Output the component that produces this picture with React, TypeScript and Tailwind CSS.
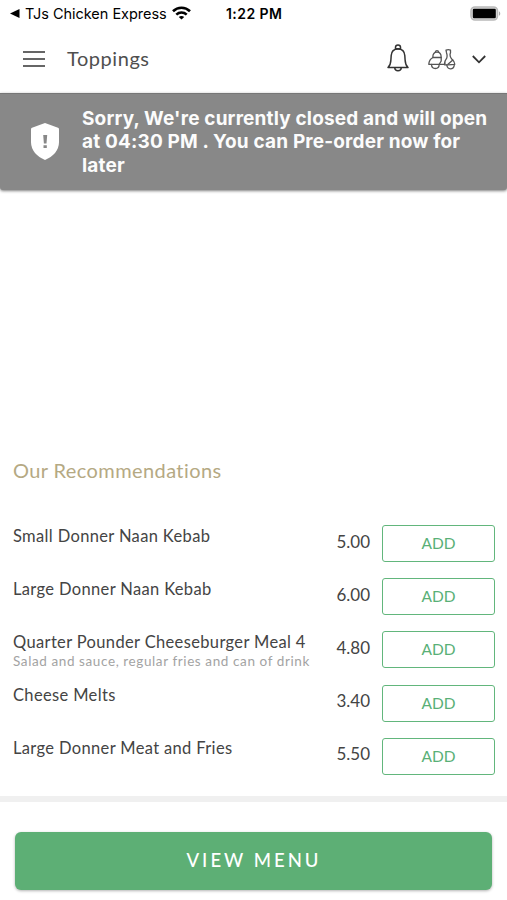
import React from 'react';

interface MenuItem {
  name: string;
  price: string;
  description?: string;
}

const items: MenuItem[] = [
  { name: 'Small Donner Naan Kebab', price: '5.00' },
  { name: 'Large Donner Naan Kebab', price: '6.00' },
  {
    name: 'Quarter Pounder Cheeseburger Meal 4',
    price: '4.80',
    description: 'Salad and sauce, regular fries and can of drink',
  },
  { name: 'Cheese Melts', price: '3.40' },
  { name: 'Large Donner Meat and Fries', price: '5.50' },
];

const StatusBar: React.FC = () => (
  <div className="flex h-[26px] items-center pl-[10px] pr-[6px] font-['Inter',sans-serif] text-black">
    <svg width="10" height="9" viewBox="0 0 10 9" className="mt-px">
      <path d="M0 4.5 9.5 0v9z" />
    </svg>
    <span className="ml-[5px] mt-[2px] w-[141px] whitespace-nowrap text-[14.5px] leading-5 tracking-[-0.03px]">
      TJs Chicken Express
    </span>
    <svg width="19" height="14" viewBox="0 0 19 14" className="ml-[6px] shrink-0" fill="none" stroke="#000" strokeWidth="2.6">
      <path d="M1 5.2C5.8.5 13.2.5 18 5.2" />
      <path d="M4.3 8.6c3-2.8 7.4-2.8 10.4 0" />
      <path d="M9.5 13.6 6.8 11c1.5-1.4 3.9-1.4 5.4 0z" fill="#000" stroke="none" />
    </svg>
    <span className="ml-[35px] mt-[2px] whitespace-nowrap text-[14px] font-semibold leading-5 tracking-[0.44px]">1:22 PM</span>
    <svg width="31" height="15" viewBox="0 0 31 15" className="ml-auto">
      <rect x="1" y="1" width="26.5" height="13" rx="4" fill="#ddd" stroke="#b9b9b9" strokeWidth="1.6" />
      <rect x="2.8" y="2.8" width="23" height="9.4" rx="1.2" />
      <path d="M29 5.2c1.7.8 1.7 3.8 0 4.6z" fill="#aaa" />
    </svg>
  </div>
);

const Header: React.FC = () => (
  <header className="flex h-[67px] items-center pl-[23px] pr-[20px]">
    <button aria-label="Menu" className="-mt-[2px] flex w-[22px] flex-col gap-[5px]">
      <span className="h-[2px] bg-[#666]" />
      <span className="h-[2px] bg-[#666]" />
      <span className="h-[2px] bg-[#666]" />
    </button>
    <h1 className="-mt-[4px] ml-[22px] font-['Lato',sans-serif] text-[20px] leading-6 tracking-[0.55px] text-[#4f4f4f]">
      Toppings
    </h1>
    <svg width="22" height="28" viewBox="0 0 22 28" className="-mt-[3px] ml-auto" fill="none" stroke="#333" strokeWidth="1.5" strokeLinejoin="round">
      <path d="M8.5 5V3.3c0-3 5-3 5 0V5" />
      <path d="M8.5 4.8h5" />
      <path d="M1 23.5c2-2 2.8-4.2 2.9-7.5l.3-4.5C4.5 7.4 7 4.9 11 4.9s6.5 2.5 6.8 6.6l.3 4.5c.1 3.3.9 5.5 2.9 7.5z" />
      <path d="M7.7 23.7c.4 4.2 6.2 4.2 6.6 0" />
    </svg>
    <svg width="28" height="21" viewBox="0 0 28 21" className="-mt-px ml-[19px]" fill="none" stroke="#555" strokeWidth="1.3" strokeLinejoin="round" strokeLinecap="round">
      <path d="M4.8 8.5C4.8 5 6.2 3.2 9 3.2s4.2 1.8 4.2 5.3z" />
      <path d="M7.3 3.3c.3-2.2 3.1-2.2 3.4 0" />
      <path d="M5 8.5C2.3 9.8 1 12 .8 15.300h16V14" />
      <path d="M13.200 8.500v3.500l-1.800 3" />
      <path d="M3.500 15.500c.2 5.300 7.500 5.300 7.700 0" />
      <path d="M18 1.200c1.600-.7 3-.7 4.500 0v2.500c-1 2.200-.4 4 .8 5.800 1.800 1.600 3.300 3.400 3.500 5.800l-6.500.5h-3.800c-.2-2.600.7-4.600 2.200-6.600.6-1.900.5-3.700-.2-5.500z" />
      <path d="M18.800 16c.9 5.500 7.600 4.800 7.500-.7" />
      <path d="M20 15.300 24.800 11" />
    </svg>
    <svg width="14" height="9" viewBox="0 0 14 9" className="-mt-px ml-[16px] mr-px" fill="none" stroke="#333" strokeWidth="1.8">
      <path d="m.8 1 6.200 6.300L13.200 1" />
    </svg>
  </header>
);

const ClosedBanner: React.FC = () => (
  <div className="flex h-[97px] items-center rounded-b-[3px] border-t border-[#777] bg-[#888] pl-[31px] shadow-[0_1px_3px_rgba(0,0,0,0.5)]">
    <svg width="28" height="37" viewBox="0 0 28 37" className="-mt-[2px] shrink-0">
      <path d="M14 0 27 4.800q1 .4 1 1.400V19c0 8.500-6 14.500-14 18C6 33.500 0 27.500 0 19V6.200q0-1 1-1.400z" fill="#fff" />
      <path d="M12.200 12h4l-.7 8.500h-2.600zM12.500 22.200h3.300v2.900h-3.300z" fill="#888" />
    </svg>
    <p className="ml-[23px] whitespace-nowrap font-['Inter',sans-serif] text-[19px] font-bold leading-[23.5px] tracking-[0.16px] text-[#fcfcfc]">
      Sorry, We're currently closed and will open
      <br />
      at 04:30 PM . You can Pre-order now for
      <br />
      later
    </p>
  </div>
);

const ItemRow: React.FC<{ item: MenuItem }> = ({ item }) => (
  <li className="flex h-[53.2px] items-start">
    <div className="flex-1 whitespace-nowrap">
      <p className="text-[16.5px] leading-[20px] tracking-[0.35px] text-[#444]">{item.name}</p>
      {item.description && (
        <p className="-mt-px text-[13.5px] leading-[20px] tracking-[0.6px] text-[#a3a3a3]">{item.description}</p>
      )}
    </div>
    <span className="mt-[6px] text-[17px] leading-[20px] text-[#444]">{item.price}</span>
    <button className="-mt-[0.5px] ml-[12px] h-[37px] w-[113px] rounded-[3px] border border-[#62b67c] text-[15.5px] text-[#59b077]">
      ADD
    </button>
  </li>
);

const App: React.FC = () => {
  return (
    <div className="flex h-[900px] w-[507px] flex-col overflow-hidden bg-white">
      <StatusBar />
      <Header />
      <ClosedBanner />

      <main className="mt-auto pl-[13px] pr-[12px] font-['Lato',sans-serif]">
        <h2 className="text-[20px] leading-6 tracking-[0.4px] text-[#b5a983]">Our Recommendations</h2>
        <ul className="mt-[44px]">
          {items.map((item) => (
            <ItemRow key={item.name} item={item} />
          ))}
        </ul>
      </main>

      <footer className="mt-[4.5px] h-[104px] shrink-0 border-t-[6px] border-[#f0f0f0] px-[15px] pt-[30px]">
        <button className="h-[58px] w-full rounded-[6px] bg-[#5daf75] pl-px font-['Lato',sans-serif] text-[18.5px] font-medium tracking-[3px] text-white shadow-[0_1px_3px_rgba(0,0,0,0.3)]">
          VIEW MENU
        </button>
      </footer>
    </div>
  );
};

export default App;
